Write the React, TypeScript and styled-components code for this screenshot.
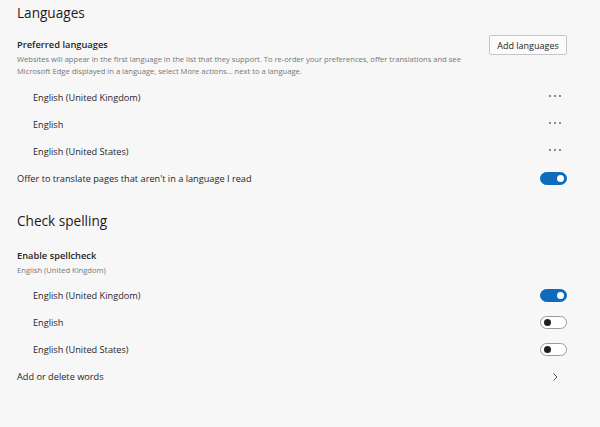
import styled, { createGlobalStyle } from "styled-components";

const Global = createGlobalStyle`
  html, body {
    margin: 0;
    padding: 0;
    background: #f7f7f7;
  }
  body {
    font-family: "Open Sans", "Noto Sans", sans-serif;
    color: #1f1f1f;
  }
`;

const Page = styled.div`
  width: 600px;
  height: 427px;
  box-sizing: border-box;
  padding: 0 33px 0 17px;
  background: #f7f7f7;
`;

const Heading = styled.h2<{ gap: number }>`
  margin: ${(p) => p.gap}px 0 0;
  height: 26px;
  line-height: 26px;
  font-size: 13.6px;
  font-weight: 500;
  color: #1b1b1b;
`;

const Header = styled.div<{ gap: number }>`
  display: flex;
  justify-content: space-between;
  align-items: flex-start;
  margin-top: ${(p) => p.gap}px;
`;

const TextCol = styled.div`
  display: flex;
  flex-direction: column;
  padding-top: 2px;
`;

const Label = styled.div`
  font-size: 9.3px;
  font-weight: 600;
  line-height: 16px;
  color: #262626;
`;

const Desc = styled.div`
  font-size: 7.6px;
  line-height: 12px;
  color: #767676;
  max-width: 450px;
`;

const AddButton = styled.button`
  width: 78px;
  height: 20px;
  padding: 0;
  border: 1px solid #c6c6c6;
  background: #fbfbfb;
  font-family: inherit;
  font-size: 9px;
  color: #1f1f1f;
  border-radius: 2px;
`;

const List = styled.div<{ gap: number }>`
  display: flex;
  flex-direction: column;
  margin-top: ${(p) => p.gap}px;
`;

const Row = styled.div<{ indent?: boolean }>`
  display: flex;
  align-items: center;
  justify-content: space-between;
  height: 27px;
  padding-left: ${(p) => (p.indent ? 16 : 0)}px;
  font-size: 9.2px;
  color: #262626;
`;

const Track = styled.span<{ on: boolean }>`
  position: relative;
  box-sizing: border-box;
  width: 27px;
  height: 13px;
  border-radius: 7px;
  background: ${(p) => (p.on ? "#0f6cbd" : "#ffffff")};
  border: 1px solid ${(p) => (p.on ? "#0f6cbd" : "#9a9a9a")};
`;

const Knob = styled.span<{ on: boolean }>`
  position: absolute;
  top: 2px;
  left: ${(p) => (p.on ? 16 : 3)}px;
  width: 7px;
  height: 7px;
  border-radius: 50%;
  background: ${(p) => (p.on ? "#ffffff" : "#1f1f1f")};
`;

function Toggle({ on }: { on: boolean }) {
  return (
    <Track on={on}>
      <Knob on={on} />
    </Track>
  );
}

function MoreDots() {
  return (
    <svg width="14" height="6" viewBox="0 0 14 6" style={{ marginRight: 5, marginBottom: 3 }}>
      <circle cx="2" cy="3" r="0.9" fill="#555" />
      <circle cx="7" cy="3" r="0.9" fill="#555" />
      <circle cx="12" cy="3" r="0.9" fill="#555" />
    </svg>
  );
}

function Chevron() {
  return (
    <svg width="12" height="12" viewBox="0 0 12 12" style={{ marginRight: 6 }}>
      <path d="M4.5 2.5 L8 6 L4.5 9.5" fill="none" stroke="#444" strokeWidth="0.9" />
    </svg>
  );
}

const preferred = ["English (United Kingdom)", "English", "English (United States)"];
const spell = [
  { name: "English (United Kingdom)", on: true },
  { name: "English", on: false },
  { name: "English (United States)", on: false },
];

export default function App() {
  return (
    <Page>
      <Global />
      <Heading gap={0}>Languages</Heading>
      <Header gap={9}>
        <TextCol>
          <Label>Preferred languages</Label>
          <Desc>
            Websites will appear in the first language in the list that they support. To re-order
            your preferences, offer translations and see Microsoft Edge displayed in a language,
            select More actions... next to a language.
          </Desc>
        </TextCol>
        <AddButton>Add languages</AddButton>
      </Header>
      <List gap={7}>
        {preferred.map((l) => (
          <Row indent key={l}>
            <span>{l}</span>
            <MoreDots />
          </Row>
        ))}
        <Row>
          <span>Offer to translate pages that aren't in a language I read</span>
          <Toggle on />
        </Row>
      </List>
      <Heading gap={16}>Check spelling</Heading>
      <Header gap={12}>
        <TextCol>
          <Label>Enable spellcheck</Label>
          <Desc>English (United Kingdom)</Desc>
        </TextCol>
      </Header>
      <List gap={6}>
        {spell.map((s) => (
          <Row indent key={s.name}>
            <span>{s.name}</span>
            <Toggle on={s.on} />
          </Row>
        ))}
        <Row>
          <span>Add or delete words</span>
          <Chevron />
        </Row>
      </List>
    </Page>
  );
}
